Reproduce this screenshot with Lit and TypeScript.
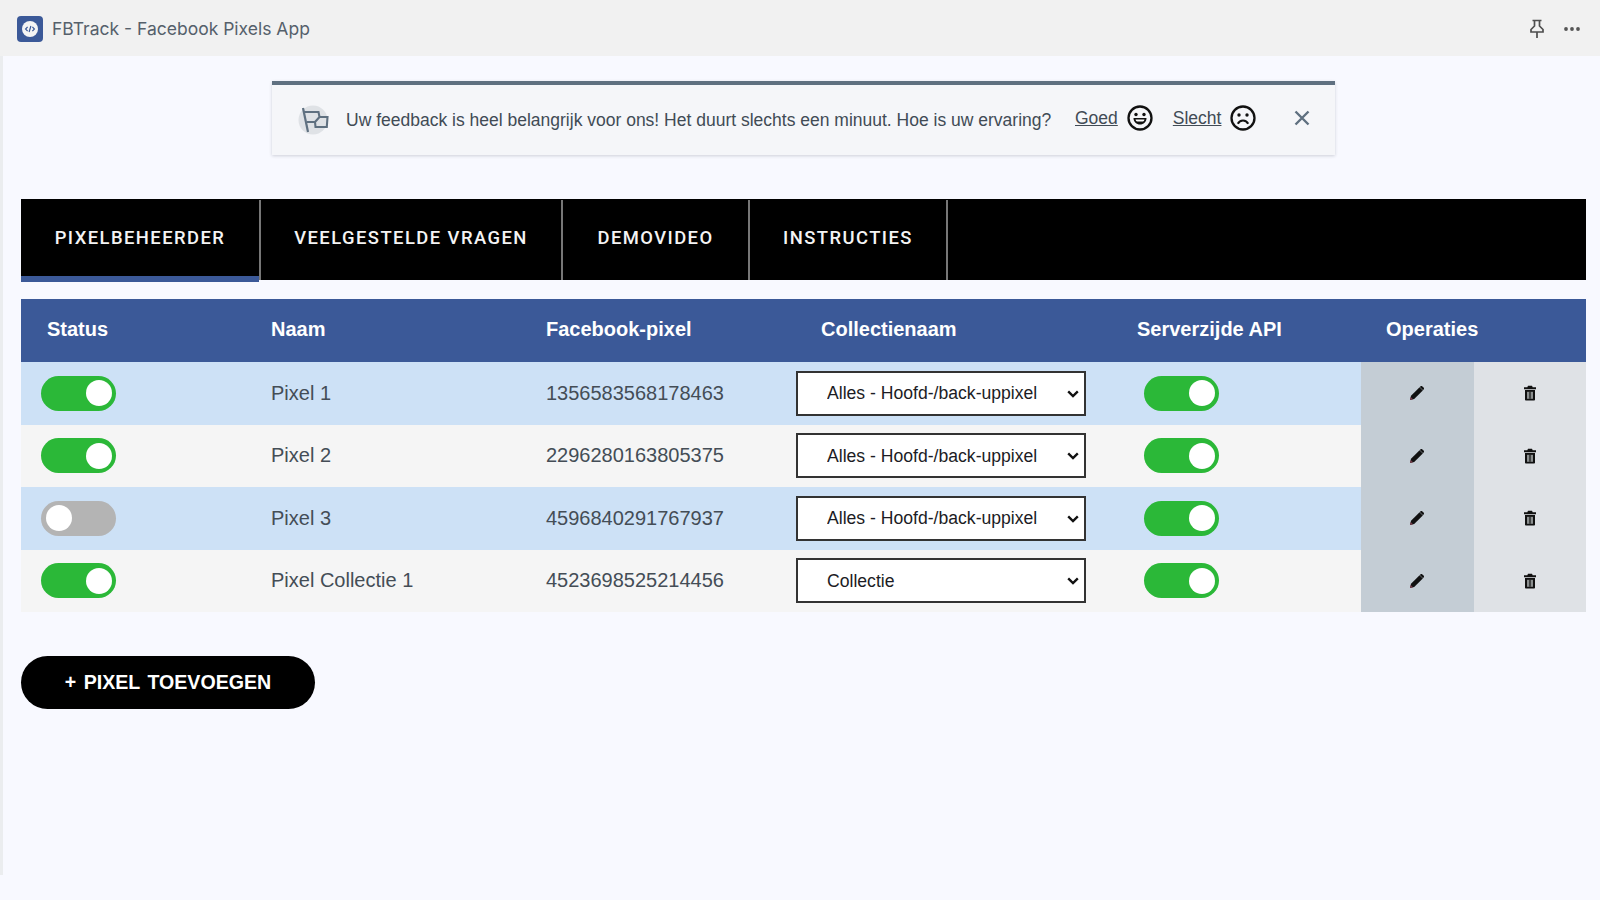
import { LitElement, html, css } from "lit";
import { customElement } from "lit/decorators.js";

const rows = [
  { on: true, name: "Pixel 1", id: "1356583568178463", coll: "Alles - Hoofd-/back-uppixel" },
  { on: true, name: "Pixel 2", id: "2296280163805375", coll: "Alles - Hoofd-/back-uppixel" },
  { on: false, name: "Pixel 3", id: "4596840291767937", coll: "Alles - Hoofd-/back-uppixel" },
  { on: true, name: "Pixel Collectie 1", id: "4523698525214456", coll: "Collectie" },
];

const pencil = html`<svg class="op" viewBox="0 0 16 16" width="16" height="16"><path d="M1 15l1-4.2L10.6 2.2l3.2 3.2L5.2 14z" fill="#111"/><path d="M11.4 1.4c.6-.6 1.4-.6 2 0l1.200 1.200c.6.6.6 1.400 0 2l-.6.6-3.200-3.200z" fill="#111"/><path d="M1 15l.7-3 2.300 2.300z" fill="#7a3b4a"/></svg>`;
const trash = html`<svg class="op" viewBox="0 0 14 16" width="14" height="16"><path d="M5 .8h4l.7 1.400H13v2H1v-2h3.300z" fill="#111"/><path d="M2 5h10v9.400c0 .7-.5 1.200-1.200 1.200H3.200c-.7 0-1.200-.5-1.200-1.200z" fill="#111"/><path d="M4 6.800h6v7H4z" fill="#8b8f8f"/><path d="M6.400 6.800h1.200v7H6.400z" fill="#111"/></svg>`;

@customElement("app-root")
export class AppRoot extends LitElement {
  static styles = css`
    :host { display: block; width: 1600px; height: 900px; background: #f8f9ff; overflow: hidden; font-family: "Liberation Sans", Arial, sans-serif; }
    * { box-sizing: border-box; }
    .bar { height: 56px; background: #f1f1f1; display: flex; align-items: center; padding: 2px 19px 0 17px; }
    .logo { width: 26px; height: 26px; margin-right: 9px; flex: none; }
    .title { font: 400 17.5px Inter, sans-serif; color: #55606b; padding-bottom: 2px; }
    .bar-right { margin-left: auto; display: flex; align-items: center; gap: 18px; }
    .page { width: 1600px; height: 819px; border-left: 3px solid #ebedef; padding: 25px 14px 0 18px; }
    .notice { margin-left: 251px; width: 1063px; height: 74px; background: #f5f6f9; border-top: 4px solid #5f7080; box-shadow: 0 1px 3px rgba(60,70,80,.22); display: flex; align-items: center; color: #414b55; font-size: 17.5px; padding-left: 26px; }
    .flag { flex: none; margin-right: 16px; }
    .msg { width: 729px; flex: none; white-space: nowrap; }
    .fb { color: #414b55; text-decoration: underline; margin-right: 9px; margin-bottom: 3px; }
    .face { flex: none; margin-bottom: 5px; }
    .good-face { margin-right: 20px; }
    .bad-face { margin-right: 38px; }
    .close { margin-bottom: 5px; flex: none; }
    .tabs { margin-top: 44px; height: 81px; background: #000; display: flex; align-items: stretch; }
    .tab { color: #f4f4f4; font: 500 18.4px Roboto, sans-serif; letter-spacing: 1.45px; display: flex; align-items: center; justify-content: center; padding-bottom: 5px; border-right: 2px solid #777; margin-top: 1px; white-space: nowrap; position: relative; }
    .tab.active::after { content: ""; position: absolute; left: 0; right: 0; bottom: -2px; height: 6px; background: #3b5998; }
    .table { margin-top: 19px; display: grid; grid-template-columns: 250px 275px 250px 341px 224px 113px 112px; grid-template-rows: 63px repeat(4, 62.5px); }
    .hd { background: #3b5998; color: #fff; font-weight: 700; font-size: 20px; display: flex; align-items: center; padding-bottom: 2px; }
    .hd.p { padding-left: 26px; }
    .hd.q { padding-left: 25px; }
    .hd.ops { grid-column: span 2; }
    .cell { display: flex; align-items: center; font-size: 20px; color: #444d56; }
    .blue { background: #cde1f6; }
    .grey { background: #f5f5f5; }
    .first { padding-left: 20px; }
    .srv { padding-left: 7px; }
    .opA { background: #c4cdd5; justify-content: center; padding-right: 2px; }
    .opB { background: #dfe2e6; justify-content: center; }
    .toggle { width: 75px; height: 35px; border-radius: 18px; background: #2bb838; display: block; position: relative; }
    .toggle::after { content: ""; position: absolute; width: 26px; height: 26px; border-radius: 50%; background: #fff; top: 4.5px; right: 4px; }
    .toggle.off { background: #b4b4b4; }
    .toggle.off::after { right: auto; left: 5px; }
    .sel { position: relative; width: 290px; height: 45px; display: block; }
    select { appearance: none; -webkit-appearance: none; width: 100%; height: 100%; border: 2px solid #333; background: #fff; font: 17.6px "Liberation Sans", Arial, sans-serif; color: #1c1c24; padding-left: 29px; border-radius: 0; display: block; }
    .chev { position: absolute; right: 7px; top: 19px; pointer-events: none; }
    .add { margin-top: 44px; display: block; width: 294px; height: 53px; border-radius: 27px; background: #000; border: none; color: #fff; font: 700 19.6px "Liberation Sans", Arial, sans-serif; padding: 0; word-spacing: 2px; }
  `;

  render() {
    return html`
      <div class="bar">
        <svg class="logo" viewBox="0 0 26 26"><rect width="26" height="26" rx="4" fill="#3b5998"/><circle cx="13" cy="13" r="8" fill="#f4f4f4"/><path d="M10.600 10.800L8.600 13l2 2.200M15.400 10.800l2 2.200-2 2.200M13.900 10l-1.800 6" fill="none" stroke="#3b5998" stroke-width="1.200"/></svg>
        <span class="title">FBTrack - Facebook Pixels App</span>
        <div class="bar-right">
          <svg viewBox="0 0 16 20" width="16" height="20" fill="none" stroke="#4e4e4e" stroke-width="1.700"><path d="M3.500 1.500h9M5.500 1.500v5.500L2 10.500v2.500h12v-2.500L10.500 7V1.500M8 13v6"/></svg>
          <svg viewBox="0 0 18 6" width="18" height="6" fill="#555"><circle cx="3" cy="3" r="1.900"/><circle cx="9" cy="3" r="1.900"/><circle cx="15" cy="3" r="1.900"/></svg>
        </div>
      </div>
      <div class="page">
        <div class="notice">
          <svg class="flag" width="32" height="32" viewBox="0 0 32 32"><circle cx="15" cy="16" r="14.500" fill="#dfe2e6"/><path d="M5 4l5 24" fill="none" stroke="#5f7080" stroke-width="2.200"/><path d="M6 8h14.500l1 5H29.500l-.7 10H17.500l-.5-5H9M21.500 13l-4.500 5" fill="none" stroke="#5f7080" stroke-width="2.100"/></svg>
          <span class="msg">Uw feedback is heel belangrijk voor ons! Het duurt slechts een minuut. Hoe is uw ervaring?</span>
          <span class="fb">Goed</span>
          <svg class="face good-face" width="26" height="26" viewBox="0 0 26 26"><circle cx="13" cy="13" r="11.500" fill="none" stroke="#111" stroke-width="2.300"/><circle cx="9" cy="9.500" r="1.700" fill="#111"/><circle cx="17" cy="9.500" r="1.700" fill="#111"/><path d="M6.500 13h13c0 4-3 6.500-6.500 6.500S6.500 17 6.500 13z" fill="#111"/><path d="M8.500 14.400h9c-.3 1.200-1 1.800-1.600 2.100h-5.800c-.6-.3-1.300-.9-1.600-2.100z" fill="#fff"/></svg>
          <span class="fb">Slecht</span>
          <svg class="face bad-face" width="26" height="26" viewBox="0 0 26 26"><circle cx="13" cy="13" r="11.500" fill="none" stroke="#111" stroke-width="2.300"/><circle cx="9" cy="10" r="1.700" fill="#111"/><circle cx="17" cy="10" r="1.700" fill="#111"/><path d="M7.800 18.800c1.200-2.400 3-3.300 5.200-3.300s4 .9 5.200 3.300" fill="none" stroke="#111" stroke-width="2.100"/></svg>
          <svg class="close" width="16" height="16" viewBox="0 0 16 16"><path d="M1.500 1.500l13 13M14.500 1.500l-13 13" stroke="#5f7080" stroke-width="2.400"/></svg>
        </div>
        <div class="tabs">
          <div class="tab active" style="width:240px"><span>PIXELBEHEERDER</span></div>
          <div class="tab" style="width:302px">VEELGESTELDE VRAGEN</div>
          <div class="tab" style="width:187px">DEMOVIDEO</div>
          <div class="tab" style="width:198px">INSTRUCTIES</div>
        </div>
        <div class="table">
          <div class="hd p">Status</div>
          <div class="hd">Naam</div>
          <div class="hd">Facebook-pixel</div>
          <div class="hd q">Collectienaam</div>
          <div class="hd">Serverzijde API</div>
          <div class="hd q ops">Operaties</div>
          ${rows.map((r, i) => {
            const c = i % 2 === 0 ? "blue" : "grey";
            return html`
              <div class="cell first ${c}"><span class="toggle ${r.on ? "" : "off"}"></span></div>
              <div class="cell ${c}">${r.name}</div>
              <div class="cell ${c}">${r.id}</div>
              <div class="cell ${c}"><span class="sel"><select><option>${r.coll}</option></select><svg class="chev" width="12" height="8" viewBox="0 0 12 8"><path d="M1.200 1.400L6 6l4.800-4.600" fill="none" stroke="#111" stroke-width="2.400"/></svg></span></div>
              <div class="cell srv ${c}"><span class="toggle"></span></div>
              <div class="cell opA">${pencil}</div>
              <div class="cell opB">${trash}</div>`;
          })}
        </div>
        <button class="add">+ PIXEL TOEVOEGEN</button>
      </div>
    `;
  }
}
